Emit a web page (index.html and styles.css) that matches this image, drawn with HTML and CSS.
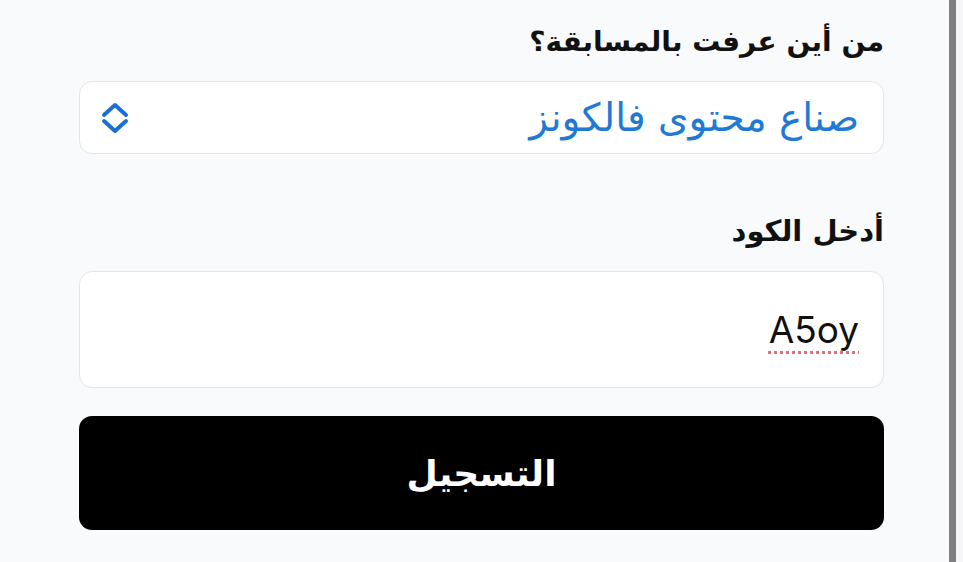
FILE: index.html
```html
<!DOCTYPE html>
<html lang="ar" dir="rtl">
<head>
<meta charset="utf-8">
<link rel="stylesheet" href="styles.css">
</head>
<body>
<div class="page">
  <div class="edge-right"></div>
  <div class="edge-bar"></div>
  <main class="form">
    <label class="label label-first">من أين عرفت بالمسابقة؟</label>
    <div class="select">
      <span class="select-value">صناع محتوى فالكونز</span>
      <svg class="chevrons" viewBox="0 0 28 32" width="28" height="32" aria-hidden="true">
        <path d="M3 13 L14 3 L25 13" fill="none" stroke="#1b6fd3" stroke-width="4" stroke-linecap="round" stroke-linejoin="round"/>
        <path d="M3 19 L14 29 L25 19" fill="none" stroke="#1b6fd3" stroke-width="4" stroke-linecap="round" stroke-linejoin="round"/>
      </svg>
    </div>
    <label class="label label-second">أدخل الكود</label>
    <div class="input"><span class="input-value">A5oy</span></div>
    <button class="submit">التسجيل</button>
  </main>
</div>
</body>
</html>
```
FILE: styles.css
```css
html, body {
  margin: 0;
  padding: 0;
  background: #f9fafc;
}
body {
  width: 963px;
  height: 562px;
  overflow: hidden;
  font-family: "DejaVu Sans", sans-serif;
}
.page {
  display: flex;
  flex-direction: row;
  height: 562px;
}
.edge-right {
  width: 7px;
  background: #f6f6f8;
}
.edge-bar {
  width: 7px;
  background: #7f7f7f;
}
.form {
  flex: 1;
  display: flex;
  flex-direction: column;
  padding: 0 65px 0 79px;
  box-sizing: border-box;
}
.label {
  display: block;
  font-weight: bold;
  color: #111;
  line-height: 40px;
}
.label-first {
  font-size: 28px;
  margin-top: 22px;
  margin-bottom: 19px;
}
.label-second {
  font-size: 29px;
  margin-top: 57px;
  margin-bottom: 20px;
}
.select {
  height: 73px;
  box-sizing: border-box;
  border: 1.5px solid #e3e5ea;
  border-radius: 13px;
  background: #fff;
  display: flex;
  align-items: center;
  justify-content: space-between;
  padding: 0 24px 0 21px;
}
.select-value {
  color: #1f7ad6;
  font-size: 39px;
  line-height: 44px;
}
.chevrons {
  display: block;
}
.input {
  height: 117px;
  box-sizing: border-box;
  border: 1.5px solid #e3e5ea;
  border-radius: 13px;
  background: #fff;
  display: flex;
  align-items: center;
  padding: 0 24px;
}
.input-value {
  font-family: "Inter", "Liberation Sans", sans-serif;
  font-size: 37px;
  color: #111;
  text-decoration: underline dotted #e0707a;
  text-decoration-thickness: 3px;
  text-underline-offset: 8px;
}
.submit {
  margin-top: 28px;
  height: 114px;
  border: none;
  border-radius: 13px;
  background: #000;
  color: #fff;
  font-family: "DejaVu Sans", sans-serif;
  font-weight: bold;
  font-size: 36px;
}
```
